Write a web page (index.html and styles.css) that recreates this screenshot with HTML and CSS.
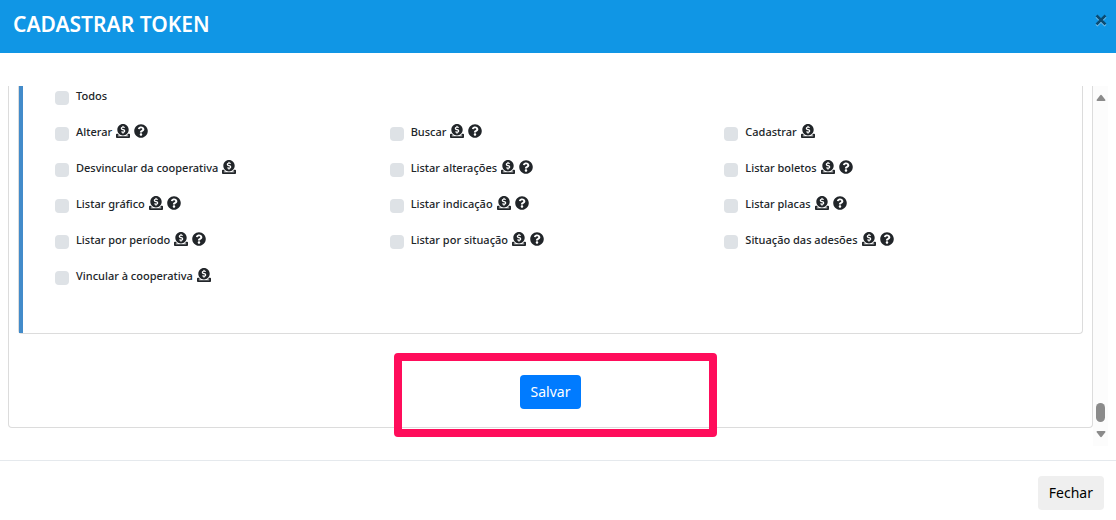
FILE: index.html
```
<!DOCTYPE html>
<html lang="pt-BR">
<head>
  <meta charset="UTF-8" />
  <title>Cadastrar Token</title>
  <link rel="stylesheet" href="styles.css">
</head>
<body>
  <svg class="sprite" aria-hidden="true">
    <symbol id="donate" viewBox="0 0 512 512">
      <path d="M256 416c114.900 0 208-93.100 208-208S370.900 0 256 0 48 93.100 48 208s93.100 208 208 208zM233.800 97.400V80.600c0-9.200 7.400-16.600 16.600-16.600h11.100c9.200 0 16.600 7.400 16.600 16.600v17c15.500.8 30.500 6.100 43 15.400 5.600 4.100 6.200 12.300 1.200 17.100L306 145.600c-3.800 3.700-9.500 3.800-14 1-5.400-3.400-11.400-5.100-17.800-5.100h-38.900c-9 0-16.300 8.200-16.300 18.300 0 8.200 5 15.500 12.100 17.600l62.300 18.700c25.700 7.700 43.700 32.400 43.700 60.100 0 34-26.400 61.500-59.100 62.400v16.800c0 9.200-7.400 16.600-16.600 16.600h-11.100c-9.200 0-16.600-7.400-16.600-16.600v-17c-15.500-.8-30.500-6.100-43-15.400-5.600-4.100-6.200-12.300-1.200-17.100l16.300-15.500c3.800-3.700 9.500-3.800 14-1 5.400 3.400 11.400 5.100 17.800 5.100h38.900c9 0 16.300-8.200 16.300-18.300 0-8.200-5-15.500-12.100-17.600l-62.300-18.700c-25.700-7.700-43.700-32.400-43.700-60.100.1-34 26.400-61.500 59.100-62.400zM480 352h-32.500c-19.600 26-44.600 47.700-73 64h63.800c5.300 0 9.600 3.600 9.600 8v16c0 4.400-4.300 8-9.600 8H73.600c-5.300 0-9.600-3.600-9.600-8v-16c0-4.400 4.300-8 9.600-8h63.800c-28.400-16.300-53.300-38-73-64H32c-17.700 0-32 14.300-32 32v96c0 17.700 14.300 32 32 32h448c17.700 0 32-14.300 32-32v-96c0-17.700-14.300-32-32-32z"/>
    </symbol>
    <symbol id="question" viewBox="0 0 512 512">
      <path d="M504 256c0 136.997-111.043 248-248 248S8 392.997 8 256C8 119.083 119.043 8 256 8s248 111.083 248 248zM262.655 90c-54.497 0-89.255 22.957-116.549 63.758-3.536 5.286-2.353 12.415 2.715 16.258l34.699 26.310c5.205 3.947 12.621 3.008 16.665-2.122 17.864-22.658 30.113-35.797 57.303-35.797 20.429 0 45.698 13.148 45.698 32.958 0 14.976-12.363 22.667-32.534 33.976C247.128 238.528 216 254.941 216 296v4c0 6.627 5.373 12 12 12h56c6.627 0 12-5.373 12-12v-1.333c0-28.462 83.186-29.647 83.186-106.667 0-58.002-60.165-102-116.531-102zM256 338c-25.365 0-46 20.635-46 46 0 25.364 20.635 46 46 46s46-20.636 46-46c0-25.364-20.635-46-46-46z"/>
    </symbol>
  </svg>

  <header class="modal-header">
    <h1 class="modal-title">CADASTRAR TOKEN</h1>
    <button type="button" class="close" aria-label="Fechar janela">
      <svg width="14" height="14" viewBox="0 0 14 14"><path d="M2.500 2.500l9 9M11.500 2.500l-9 9"/></svg>
    </button>
  </header>

  <main class="modal-body">
    <form class="card">
      <div class="panel">
        <div class="permissions">
          <label class="item all"><input type="checkbox"> Todos</label>

          <label class="item"><input type="checkbox"> Alterar <svg class="icon"><use href="#donate"/></svg><svg class="icon"><use href="#question"/></svg></label>
          <label class="item"><input type="checkbox"> Buscar <svg class="icon"><use href="#donate"/></svg><svg class="icon"><use href="#question"/></svg></label>
          <label class="item"><input type="checkbox"> Cadastrar <svg class="icon"><use href="#donate"/></svg></label>

          <label class="item"><input type="checkbox"> Desvincular da cooperativa <svg class="icon"><use href="#donate"/></svg></label>
          <label class="item"><input type="checkbox"> Listar alterações <svg class="icon"><use href="#donate"/></svg><svg class="icon"><use href="#question"/></svg></label>
          <label class="item"><input type="checkbox"> Listar boletos <svg class="icon"><use href="#donate"/></svg><svg class="icon"><use href="#question"/></svg></label>

          <label class="item"><input type="checkbox"> Listar gráfico <svg class="icon"><use href="#donate"/></svg><svg class="icon"><use href="#question"/></svg></label>
          <label class="item"><input type="checkbox"> Listar indicação <svg class="icon"><use href="#donate"/></svg><svg class="icon"><use href="#question"/></svg></label>
          <label class="item"><input type="checkbox"> Listar placas <svg class="icon"><use href="#donate"/></svg><svg class="icon"><use href="#question"/></svg></label>

          <label class="item"><input type="checkbox"> Listar por período <svg class="icon"><use href="#donate"/></svg><svg class="icon"><use href="#question"/></svg></label>
          <label class="item"><input type="checkbox"> Listar por situação <svg class="icon"><use href="#donate"/></svg><svg class="icon"><use href="#question"/></svg></label>
          <label class="item"><input type="checkbox"> Situação das adesões <svg class="icon"><use href="#donate"/></svg><svg class="icon"><use href="#question"/></svg></label>

          <label class="item"><input type="checkbox"> Vincular à cooperativa <svg class="icon"><use href="#donate"/></svg></label>
        </div>
      </div>

      <div class="actions">
        <button type="submit" class="btn btn-primary">Salvar</button>
        <div class="highlight"></div>
      </div>
    </form>

    <div class="scrollbar" aria-hidden="true">
      <svg class="arrow" viewBox="0 0 10 8"><path d="M4 1.500Q5 0 6 1.500L9.500 6Q9.500 7 8.500 7H1.500Q.5 7 .5 6z"/></svg>
      <div class="thumb"></div>
      <svg class="arrow" viewBox="0 0 10 8"><path d="M4 6.500Q5 8 6 6.500L9.500 2Q9.500 1 8.500 1H1.500Q.5 1 .5 2z"/></svg>
    </div>
  </main>

  <footer class="modal-footer">
    <button type="button" class="btn btn-default">Fechar</button>
  </footer>
</body>
</html>
```
FILE: styles.css
```
* {
  box-sizing: border-box;
}

body {
  margin: 0;
  min-height: 100vh;
  display: flex;
  flex-direction: column;
  font-family: "Segoe UI", "Noto Sans", "Open Sans", sans-serif;
  font-size: 14px;
  color: #212529;
  background: white;
}

.sprite {
  display: none;
}

.modal-header {
  display: flex;
  justify-content: space-between;
  align-items: flex-start;
  padding: 8px 8px 13px 13px;
  background: #1096e5;
}

.modal-title {
  margin: 0;
  font-size: 21px;
  font-weight: 600;
  line-height: 32px;
  color: white;
}

.close {
  display: flex;
  margin-top: 5px;
  padding: 0;
  border: 0;
  background: none;
  cursor: pointer;
}

.close path {
  fill: none;
  stroke: #0a4b73;
  stroke-width: 2.5;
  filter: drop-shadow(0 1px 0 #8fcdf3);
}

.modal-body {
  flex: 1;
  display: flex;
  align-items: flex-start;
  padding: 33px 8px 14px;
}

.card {
  flex: 1;
  padding: 0 9px 18px;
  border: 1px solid #dcdcdc;
  border-top: 0;
  border-radius: 0 0 4px 4px;
}

.panel {
  border: 1px solid #dcdcdc;
  border-top: 0;
  border-radius: 0 0 4px 4px;
}

.permissions {
  display: grid;
  grid-template-columns: repeat(3, 1fr);
  gap: 16px 0;
  padding: 0 23px 47px 32px;
  border-left: 4px solid #428bca;
}

.item {
  display: flex;
  align-items: center;
  gap: 4px;
  font-size: 11px;
  font-weight: 500;
  line-height: 20px;
}

.item.all {
  grid-column: 1 / -1;
}

.item input {
  appearance: none;
  width: 14px;
  height: 14px;
  margin: 4px 3px 0 0;
  border-radius: 4px;
  background: #dee2e6;
}

.item input:checked {
  background: #007bff;
}

.icon {
  width: 14px;
  height: 14px;
  margin-bottom: 2px;
  fill: #212529;
}

.actions {
  position: relative;
  display: flex;
  justify-content: center;
  margin-top: 41px;
}

/* marks the save button */
.highlight {
  position: absolute;
  top: -22px;
  left: calc(50% - 157px);
  width: 323px;
  height: 84px;
  border: 8px solid #ff0d5b;
  border-radius: 4px;
  pointer-events: none;
}

.btn {
  padding: 7px 11px;
  border: 0;
  border-radius: 4px;
  font: inherit;
  line-height: 20px;
  cursor: pointer;
}

.btn-primary {
  background: #007bff;
  color: white;
}

.btn-default {
  background: #efefef;
  color: black;
}

.scrollbar {
  align-self: stretch;
  display: flex;
  flex-direction: column;
  align-items: center;
  width: 15px;
  padding: 8px 0;
  background: #fcfcfc;
}

.arrow {
  width: 10px;
  height: 8px;
  fill: #8b8b8b;
}

.thumb {
  width: 9px;
  height: 19px;
  margin: auto 0 8px;
  border-radius: 5px;
  background: #8b8b8b;
}

.modal-footer {
  display: flex;
  justify-content: flex-end;
  padding: 15px 12px 10px;
  border-top: 1px solid #e5e9ed;
}
```
